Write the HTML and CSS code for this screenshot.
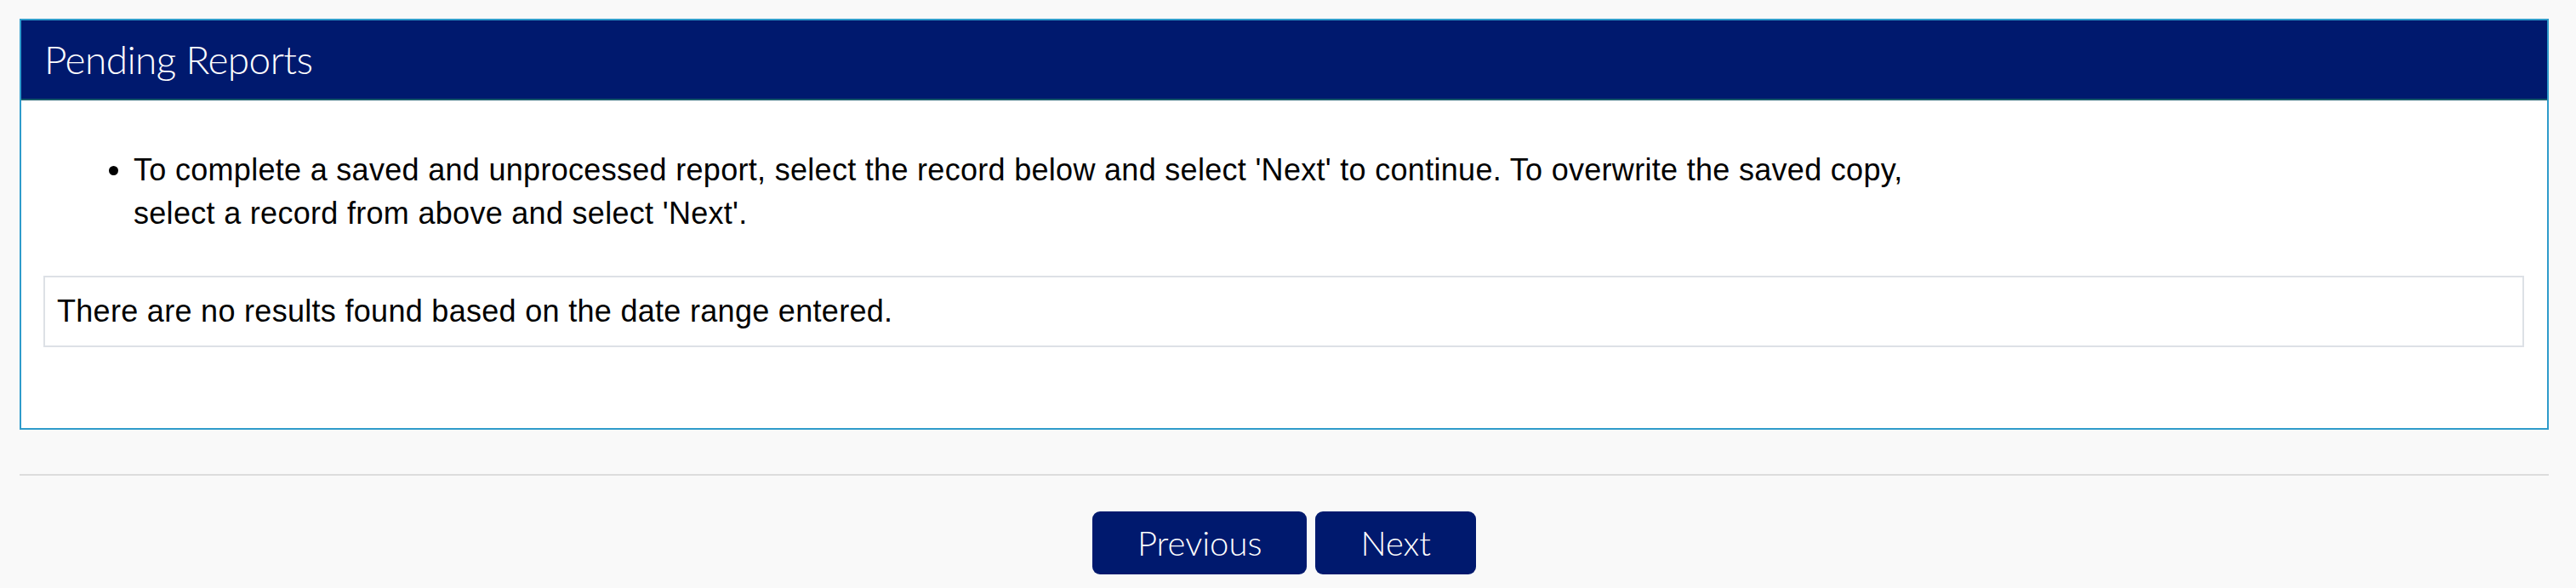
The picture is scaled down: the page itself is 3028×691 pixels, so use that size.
FILE: index.html
```html
<!DOCTYPE html>
<html>
<head>
<meta charset="utf-8">
<link rel="stylesheet" href="styles.css">
</head>
<body>
<div class="page">
  <div class="panel">
    <div class="panel-heading">Pending Reports</div>
    <div class="panel-body">
      <ul class="notes">
        <li>To complete a saved and unprocessed report, select the record below and select 'Next' to continue. To overwrite the saved copy,<br>select a record from above and select 'Next'.</li>
      </ul>
      <div class="results">There are no results found based on the date range entered.</div>
    </div>
  </div>
  <div class="divider"></div>
  <div class="actions">
    <button class="btn">Previous</button>
    <button class="btn">Next</button>
  </div>
</div>
</body>
</html>
```
FILE: styles.css
```css
html, body {
  margin: 0;
  padding: 0;
  background: #f9f9f9;
}
body {
  font-family: "Liberation Sans", Arial, sans-serif;
  font-size: 36px;
  line-height: 1.428571;
  letter-spacing: 0.3px;
  color: #000;
}
.page {
  padding: 22px 32px 0 23px;
}
.panel {
  border: 2px solid #2f9bcb;
  background: #fff;
}
.panel-heading {
  background: #00196e;
  color: #fff;
  font-family: Lato, "Open Sans", sans-serif;
  font-weight: 300;
  font-size: 46px;
  letter-spacing: -0.6px;
  line-height: 92px;
  height: 92px;
  padding-left: 27px;
  border-bottom: 2px solid #185a6a;
}
.panel-body {
  padding: 56px 27px 95px 26px;
}
.notes {
  margin: 0 0 47px 0;
  padding-left: 106px;
}
.notes li {
  margin: 0;
}
.results {
  border: 2px solid #dde1e6;
  padding: 14px 14px 15px 14px;
}
.divider {
  margin-top: 52px;
  height: 2px;
  background: #dddddd;
}
.actions {
  display: flex;
  justify-content: center;
  gap: 10px;
  padding-top: 42px;
}
.btn {
  background: #00196e;
  color: #fff;
  border: none;
  border-radius: 9px;
  font-family: Lato, "Open Sans", sans-serif;
  font-weight: 300;
  font-size: 40px;
  letter-spacing: 0;
  height: 74px;
  padding: 0 53px;
  line-height: 74px;
}
```
